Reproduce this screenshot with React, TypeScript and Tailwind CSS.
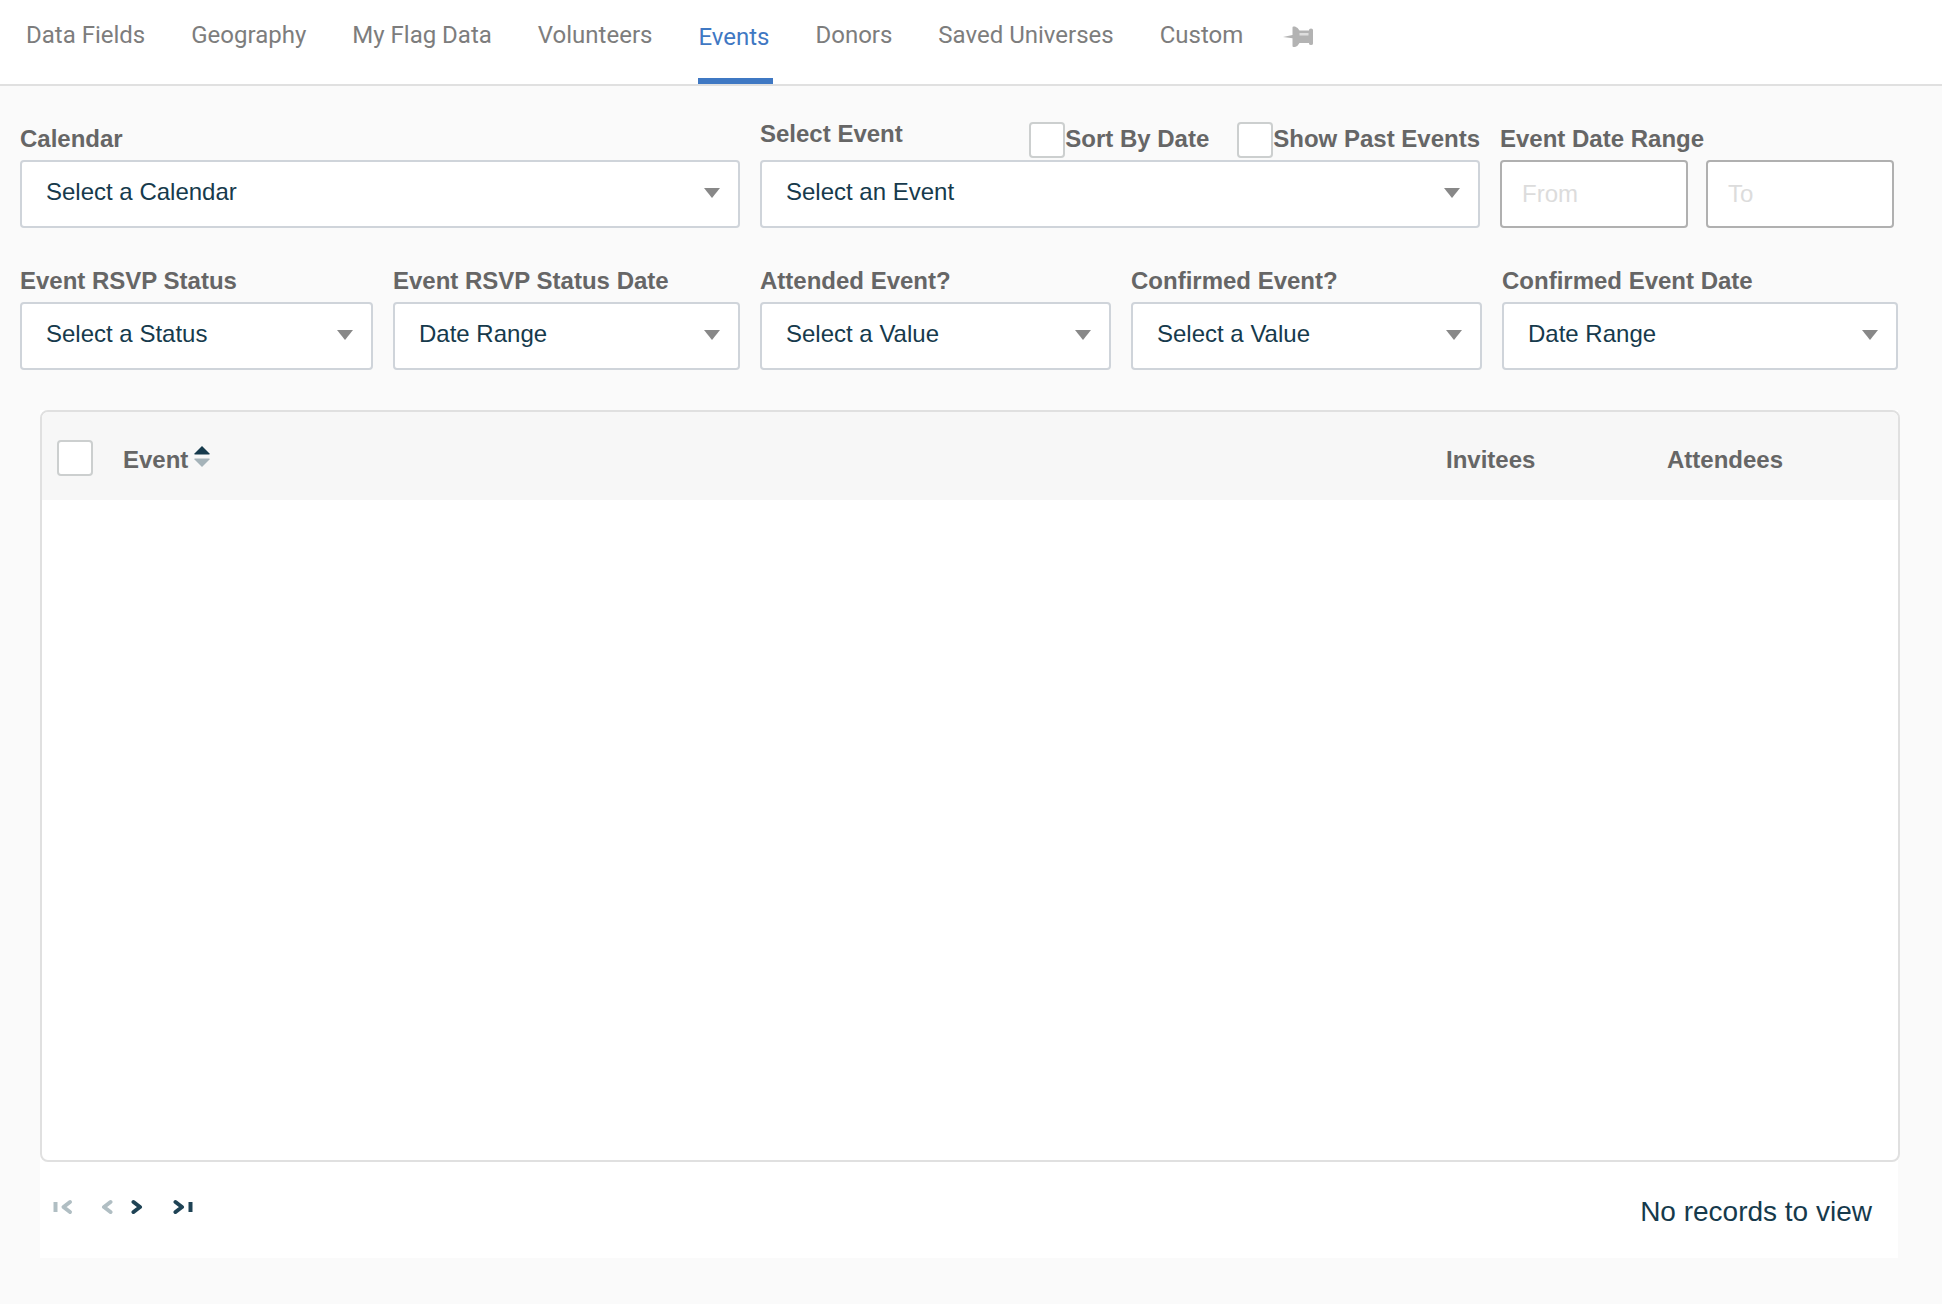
import { FC, ReactNode, useState } from "react";
import clsx from "clsx";

const TABS = [
  "Data Fields",
  "Geography",
  "My Flag Data",
  "Volunteers",
  "Events",
  "Donors",
  "Saved Universes",
  "Custom",
];

const PinIcon = () => (
  <svg width="32" height="22" viewBox="0 0 32 22" aria-hidden="true">
    <path
      fill="#b3b3b3"
      d="M0 11L9.500 9V1.500Q9.500 .5 10.500 .5H12Q15 1.500 16.500 4.500H26V4Q26 2.500 28 2.500Q30 2.500 30 4V17.500Q30 19 28 19Q26 19 26 17.500V17H16.500Q15 20 12 21H10.500Q9.500 21 9.500 20V12.200Z"
    />
    <path fill="#dedede" d="M16.500 7H25.500V9.500H16.500Z" />
  </svg>
);

const SortIcon = () => (
  <svg width="16" height="21" viewBox="0 0 16 21" aria-hidden="true">
    <path fill="#163a4c" d="M8 0L15.500 7.500V8.500H.5V7.500Z" />
    <path fill="#a5b3b9" d="M8 21L15.500 13.500V12.500H.5V13.500Z" />
  </svg>
);

const Chevron: FC<{ back?: boolean; bar?: boolean }> = ({ back, bar }) => (
  <svg
    width={bar ? 20 : 12}
    height="16"
    viewBox={bar ? "0 0 20 16" : "0 0 12 16"}
    fill="none"
    stroke={back ? "#b0bec3" : "#1f4355"}
    strokeWidth="4"
    strokeLinejoin="round"
    aria-hidden="true"
  >
    {back ? (
      <path
        strokeLinecap="round"
        d={bar ? "M17 3L10.500 8L17 13" : "M9.500 3L3 8L9.500 13"}
      />
    ) : (
      <path strokeLinecap="round" d="M2.500 3L9 8L2.500 13" />
    )}
    {bar && <path d={back ? "M2.500 3V13" : "M17.500 3V13"} />}
  </svg>
);

const Select: FC<{ id: string; value: string }> = ({ id, value }) => (
  <div className="relative">
    <select
      id={id}
      className="block h-[68px] w-full appearance-none rounded-sm border-2 border-[#cfd4da] bg-white pr-12 pb-1 pl-6 text-2xl text-[#163a4c]"
    >
      <option>{value}</option>
    </select>
    <svg
      className="pointer-events-none absolute top-7 right-5"
      width="16"
      height="10"
      viewBox="0 0 16 10"
      aria-hidden="true"
    >
      <path fill="#888" d="M0 0H16L8 10Z" />
    </svg>
  </div>
);

const Field: FC<{ id: string; label: string; value: string }> = ({
  id,
  label,
  value,
}) => (
  <div>
    <label htmlFor={id} className="mb-1 block leading-[34px] font-bold">
      {label}
    </label>
    <Select id={id} value={value} />
  </div>
);

const CHECKBOX =
  "size-9 shrink-0 appearance-none rounded-sm border-2 border-[#cccfcf] bg-white checked:bg-[#3f78c3]";

const CheckField: FC<{ children: ReactNode }> = ({ children }) => (
  <label className="flex font-bold whitespace-nowrap">
    <input type="checkbox" className={CHECKBOX} />
    <span className="leading-[34px]">{children}</span>
  </label>
);

const DateInput: FC<{ label: string }> = ({ label }) => (
  <input
    type="text"
    placeholder={label}
    aria-label={`Event Date Range ${label}`}
    className="h-[68px] w-full min-w-0 rounded-sm border-2 border-[#b0b0b0] bg-white px-5 text-2xl text-[#163a4c] placeholder:text-[#dcdcdc]"
  />
);

const Tabs = () => {
  const [active, setActive] = useState("Events");

  return (
    <nav className="flex border-b-2 border-[#e0e0e0] bg-white pl-[26px] font-[Roboto,sans-serif] text-2xl">
      <div className="flex h-[84px] gap-[42px]">
        {TABS.map((tab) => (
          <button
            key={tab}
            onClick={() => setActive(tab)}
            className={clsx(
              "flex items-start pr-1 leading-[30px] whitespace-nowrap",
              tab === active
                ? "border-b-6 border-[#3f78c3] pt-[22px] text-[#3f78c3]"
                : "pt-5 text-[#7d7d7d]"
            )}
          >
            {tab}
          </button>
        ))}
      </div>
      <button aria-label="Pin tab" className="ml-9 flex items-start pt-[26px]">
        <PinIcon />
      </button>
    </nav>
  );
};

const EventTable = () => (
  <table className="w-full table-fixed text-left">
    <thead>
      <tr className="h-[88px] bg-[#f7f7f7]">
        <th className="w-[81px] pt-1 pl-[15px]">
          <input
            type="checkbox"
            aria-label="Select all events"
            className={clsx(CHECKBOX, "block")}
          />
        </th>
        <th className="pt-2">
          <button className="flex items-center gap-1.5 font-bold">
            Event
            <span className="pb-2">
              <SortIcon />
            </span>
          </button>
        </th>
        <th className="w-[221px] pt-2">Invitees</th>
        <th className="w-[231px] pt-2">Attendees</th>
      </tr>
    </thead>
    <tbody />
  </table>
);

const Pager = () => (
  <div className="flex h-24 items-start justify-between pt-9 pr-[26px] pl-[13px]">
    <div className="flex items-start pt-px">
      <button aria-label="First page" disabled>
        <Chevron back bar />
      </button>
      <button aria-label="Previous page" className="ml-7" disabled>
        <Chevron back />
      </button>
      <button aria-label="Next page" className="ml-[18px]">
        <Chevron />
      </button>
      <button aria-label="Last page" className="ml-[30px]">
        <Chevron bar />
      </button>
    </div>
    <p className="text-[28px] leading-7 text-[#163a4c]">No records to view</p>
  </div>
);

export default function App() {
  return (
    <div className="flex min-h-screen flex-col bg-[#fafafa] font-['Liberation_Sans',Arial,sans-serif] text-2xl text-[#666]">
      <Tabs />

      <div className="mt-9 grid grid-cols-[720fr_720fr_394fr] gap-5 pr-12 pl-5">
        <Field id="calendar" label="Calendar" value="Select a Calendar" />

        <div>
          <div className="mb-0.5 flex h-9 items-start">
            <label htmlFor="event" className="mr-auto leading-6 font-bold">
              Select Event
            </label>
            <div className="flex gap-7">
              <CheckField>Sort By Date</CheckField>
              <CheckField>Show Past Events</CheckField>
            </div>
          </div>
          <Select id="event" value="Select an Event" />
        </div>

        <fieldset className="min-w-0">
          <legend className="mb-1 leading-[34px] font-bold">
            Event Date Range
          </legend>
          <div className="flex gap-[18px]">
            <DateInput label="From" />
            <DateInput label="To" />
          </div>
        </fieldset>
      </div>

      <div className="mt-9 grid grid-cols-[353fr_347fr_351fr_351fr_396fr] gap-5 pr-11 pl-5">
        <Field id="rsvp" label="Event RSVP Status" value="Select a Status" />
        <Field id="rsvp-date" label="Event RSVP Status Date" value="Date Range" />
        <Field id="attended" label="Attended Event?" value="Select a Value" />
        <Field id="confirmed" label="Confirmed Event?" value="Select a Value" />
        <Field
          id="confirmed-date"
          label="Confirmed Event Date"
          value="Date Range"
        />
      </div>

      <section className="mt-10 mr-11 mb-[46px] ml-10 flex flex-1 flex-col bg-white">
        <div className="-mr-0.5 flex-1 overflow-hidden rounded-lg border-2 border-[#e0e0e0] bg-white">
          <EventTable />
        </div>
        <Pager />
      </section>
    </div>
  );
}
